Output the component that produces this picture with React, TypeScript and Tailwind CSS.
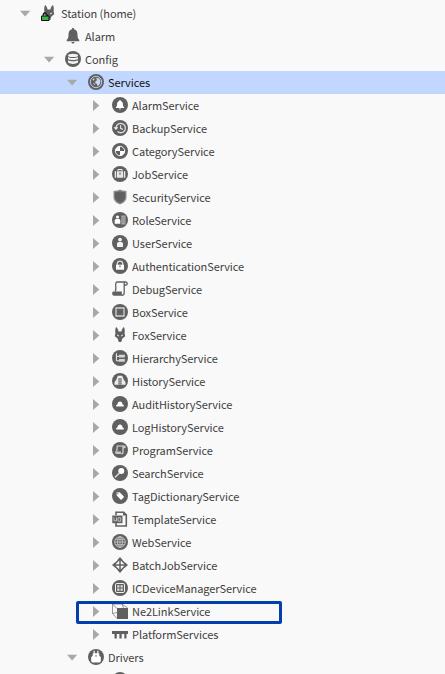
import type { ReactNode } from 'react'
import clsx from 'clsx'

const DARK = '#606060'
const LIGHT = '#f2f2f2'

// Round badge that most of the service icons sit on
function Disc({ children }: { children?: ReactNode }) {
  return (
    <>
      <circle cx="8" cy="8" r="8" fill={DARK} />
      {children}
    </>
  )
}

const bell = 'M8 3.1c.6 0 .8.4.8.8 1.5.4 2.1 1.6 2.1 3.2 0 1.7.5 2.5 1.3 3.3v.6H3.8v-.6c.8-.8 1.3-1.6 1.3-3.3 0-1.6.6-2.8 2.1-3.2 0-.4.2-.8.8-.8zM6.9 11.6h2.2c-.1.7-.5 1-1.1 1s-1-.3-1.1-1z'
const fox = 'M4 0C5.400 1 6.300 2.600 6.600 4.500h2.800C9.700 2.600 10.600 1 12 0c.8 2 .9 4.200.6 6.300L13.200 9.200l-2.800 2.300L9.200 15H6.800L5.600 11.500 2.800 9.200l.6-2.900C3.100 4.200 3.200 2 4 0z'
const foxEyes = 'M5 7.500l1.800.8v1.100L5.300 8.800zM11 7.500l-1.800.8v1.100l1.500-.6z'

const icons: Record<string, ReactNode> = {
  station: (
    <>
      <path d={fox} fill={DARK} />
      <path d={foxEyes} fill={LIGHT} />
      <path d="M2.200 11V9.800a2 2 0 0 1 4 0V11" fill="none" stroke="#111" strokeWidth="1.200" />
      <path d="M.5 11h7.500v4.500H.500z" fill="#38b449" stroke="#111" />
    </>
  ),
  alarm: (
    <path d="M8 0c.8 0 1.100.5 1.100 1.200 2.400.6 3.400 2.600 3.400 5.300 0 3 .5 4.300 1.800 5.500v1.200H1.700V12C3 10.800 3.500 9.500 3.500 6.500c0-2.700 1-4.700 3.400-5.300C6.900.5 7.200 0 8 0zM6.300 14h3.400c-.1.900-.8 1.500-1.700 1.500S6.400 14.900 6.300 14z" fill={DARK} />
  ),
  config: (
    <Disc>
      <ellipse cx="8" cy="4.400" rx="5" ry="1.700" fill={LIGHT} />
      <path d="M3 6c2 1.400 8 1.400 10 0v2c-2 1.400-8 1.400-10 0zM3 9.300c2 1.400 8 1.400 10 0v2.300c-2 1.900-8 1.900-10 0z" fill={LIGHT} />
    </Disc>
  ),
  services: (
    <Disc>
      <circle cx="8" cy="8" r="5.700" fill="none" stroke="#b9c8e6" strokeWidth="1" />
      <path d="M8.200 3.800l3 .6 1.300 2.600-.8 3.200-2.200 2-.5-2.200-1.800-.7.200-2 1.600-1.100zM4.600 5.200l1.800-1 .1 1.200-1.300 1.300zM5 9l1.800.8-.3 1.800z" fill="#cbd8f2" />
    </Disc>
  ),
  alarmService: <Disc><path d={bell} fill="#fff" /></Disc>,
  backup: (
    <Disc>
      <path d="M4 8a4.700 4.700 0 1 1 1.500 3.500" fill="none" stroke="#dedede" strokeWidth="1.300" />
      <path d="M1.500 7.200h4.800L4 10z" fill={LIGHT} />
      <path d="M8.600 5.200v3.200l2.300 1" fill="none" stroke="#dedede" strokeWidth="1.200" />
    </Disc>
  ),
  category: (
    <Disc>
      <circle cx="8" cy="8" r="4.700" fill={DARK} stroke={LIGHT} strokeWidth="1" />
      <path d="M8 8V3.300A4.700 4.700 0 0 0 3.300 8zM8 8v4.700A4.700 4.700 0 0 0 12.700 8z" fill="#fff" />
    </Disc>
  ),
  job: (
    <Disc>
      <path d="M6 5V3.500h4V5" fill="none" stroke={LIGHT} />
      <path d="M2.700 5.200h1.500v6.600H2.700zM5 5.200h6v6.600H5zM11.800 5.200h1.500v6.600h-1.500z" fill="#e8e8e8" />
      <path d="M7.300 6.800h1.400v1.600H7.300z" fill={DARK} />
    </Disc>
  ),
  security: (
    <>
      <path d="M8 .6c2.200 1 4.200 1.400 6.500 1.400v6c0 3.700-2.500 5.900-6.500 7.500C4 13.900 1.500 11.700 1.500 8V2C3.800 2 5.800 1.600 8 .6z" fill="#8c8c8c" />
      <path d="M8 2.200c1.700.7 3.400 1 5.200 1.100V8c0 3-2 4.600-5.200 6-3.200-1.400-5.200-3-5.200-6V3.300C4.600 3.200 6.300 2.900 8 2.200z" fill={DARK} />
    </>
  ),
  role: (
    <Disc>
      <circle cx="5.500" cy="5" r="1.600" fill="#fff" />
      <path d="M2.700 11.700V8.500c0-1 .7-1.600 1.600-1.600h2.400c.9 0 1.600.6 1.600 1.600v3.200z" fill="#fff" />
      <path d="M9.300 3.500h4.200v9H9.300z" fill="#a6a6a6" />
      <path d="M9.300 5.900h4.200M9.300 8h4.200M9.300 10.100h4.200" stroke="#8a8a8a" strokeWidth=".7" />
    </Disc>
  ),
  user: (
    <Disc>
      <circle cx="8" cy="4.600" r="1.900" fill={LIGHT} />
      <path d="M5 12V8.700c0-1.100.8-1.800 1.800-1.800h2.400c1 0 1.800.7 1.800 1.800V12z" fill={LIGHT} />
    </Disc>
  ),
  auth: (
    <Disc>
      <path d="M5.300 7V5.900a2.700 2.700 0 0 1 5.400 0V7" fill="none" stroke="#dcdcdc" strokeWidth="1.200" />
      <path d="M4 6.700h8v5H4z" fill="#fff" />
      <path d="M7.400 7.500h1.200v1.800H7.400z" fill={DARK} />
    </Disc>
  ),
  debug: (
    <>
      <path d="M3.300 10.500c1.200-2.500 0-6 .5-8.200.2-.9.700-1.300 1.500-1.300h8.500c1.900.2 1.800 3 .2 3h-1.800M12.200 1.500v10.300c0 1.700-.8 2.500-2.200 2.500" fill="none" stroke={DARK} strokeWidth="1.300" />
      <path d="M1.200 10.500h8.600v1.700c0 1 .4 1.900 1 2.600H2.200c-1.300 0-2-.8-2-2.200 0-1.300.3-2.100 1-2.100z" fill={DARK} />
    </>
  ),
  box: (
    <Disc>
      <path d="M4 4h8v8H4z" fill={DARK} stroke="#d0d0d0" strokeWidth="1.300" />
    </Disc>
  ),
  fox: (
    <>
      <path d={fox} fill={DARK} />
      <path d={foxEyes} fill={LIGHT} />
    </>
  ),
  hierarchy: (
    <Disc>
      <path d="M4.400 3.300v7.500H8M4.400 6.300H8" fill="none" stroke={LIGHT} />
      <path d="M7 4.800h5.800v2.800H7zM7 9h5.800v2.800H7z" fill="#d6d6d6" />
    </Disc>
  ),
  history: (
    <Disc>
      <path d="M5.800 2.700h4.400l1.300 3.500 2 3v2.500h-11V9.200l2-3z" fill="#ededed" />
      <path d="M6.300 5.200h3.400v6.500H6.300z" fill="#858585" />
      <path d="M6.300 7.300h3.400M6.300 9.500h3.400" stroke="#b5b5b5" strokeWidth=".7" />
    </Disc>
  ),
  cloud: (
    <Disc>
      <path d="M4.800 10.400c-.9 0-1-1-.4-1.500.3-.3.700-.4 1-.5.200-1.600 1.200-2.800 2.600-2.800s2.400 1.200 2.600 2.800c.3.100.7.200 1 .5.600.5.500 1.500-.4 1.500z" fill="#fff" />
    </Disc>
  ),
  program: (
    <Disc>
      <path d="M4.700 9.500L5.300 4h7.100c1 .3.800 1.800 0 1.800H11M11 4.200v6.200c0 1-.6 1.500-1.400 1.500" fill="none" stroke="#e0e0e0" strokeWidth="1.100" />
      <path d="M3 9.500h5.900c0 1.100.3 1.900.8 2.500H4.500C3.500 12 3 11 3 9.500z" fill="#c8c8c8" />
    </Disc>
  ),
  search: (
    <Disc>
      <circle cx="9.300" cy="6" r="3" fill="#fff" />
      <path d="M7.200 8.200l-3.800 3.900" stroke="#dedede" strokeWidth="1.400" strokeLinecap="round" />
    </Disc>
  ),
  tag: (
    <Disc>
      <path d="M4.600 4.600l3-.3 4 3.900c.4.400.4.800 0 1.200L9.700 11.400c-.4.400-.8.400-1.200 0L4.700 7.500z" fill="#fff" />
      <circle cx="5.900" cy="5.700" r=".6" fill={DARK} />
    </Disc>
  ),
  template: (
    <>
      <path d="M4 4V1.200h7.500l2.800 2.800V15H4v-3" fill="none" stroke={DARK} strokeWidth="1.600" />
      <path d="M.3 4.500h10.200v7.700H.3z" fill={DARK} />
      <path d="M2 6.500v3.300h2.500V6.500M6 6.800v3.400h2.700V6.800z" fill="none" stroke="#c5c5c5" strokeWidth=".9" />
      <path d="M11 .8h1l2.700 2.700v1H11z" fill={DARK} />
    </>
  ),
  web: (
    <Disc>
      <g fill="none" stroke="#c4c4c4" strokeWidth=".9">
        <circle cx="8" cy="8" r="5.300" />
        <ellipse cx="8" cy="8" rx="2.500" ry="5.300" />
        <path d="M8 2.700v10.600M2.700 8h10.600M3.500 5.300h9M3.500 10.700h9" />
      </g>
    </Disc>
  ),
  batch: (
    <>
      <path d="M8 1.800L14.200 8 8 14.200 1.800 8z" fill="none" stroke={DARK} strokeWidth="1.600" />
      <path d="M8 1v14M1 8h14" stroke={DARK} strokeWidth="1.500" />
      <path d="M8 0l2.800 3.300H5.200zM8 16l2.800-3.300H5.200zM0 8l3.300-2.800v5.600zM16 8l-3.300-2.800v5.600z" fill={DARK} />
    </>
  ),
  device: (
    <Disc>
      <rect x="3.500" y="3.500" width="9" height="9" rx="1.300" fill="none" stroke={LIGHT} strokeWidth="1" />
      <path d="M5.200 5.200h2.300v2.300H5.200zM8.500 5.200h2.300v2.300H8.500zM5.200 8.500h2.300v2.300H5.200zM8.500 8.500h2.300v2.300H8.500z" fill="#dcdcdc" />
    </Disc>
  ),
  link: (
    <>
      <path d="M.5 1h9.500l1.500 4M.5 1v9.500L5 15.500M.5 10.500l4.500-1M.5 1L5 5.500M10 1l5.500 4" fill="none" stroke="#7c7c7c" strokeWidth=".8" />
      <path d="M5 5h11v11H5z" fill={DARK} />
    </>
  ),
  platform: (
    <path d="M0 5h16v3h-1.500v4.500h-2.200V8H9.700v4.500H7.400V8H4.800v4.500H2.500V8H0z" fill={DARK} />
  ),
  drivers: (
    <Disc>
      <path d="M5.500 1.700h1.300v3H5.500zM9.200 1.700h1.300v3H9.200z" fill={LIGHT} />
      <path d="M4.800 4.300h6.400v2.300l1.600 1.700v4.200l-1.300.9h-7l-1.300-.9V8.300l1.600-1.700z" fill="#fff" />
      <path d="M7.300 6.200h1.400v1.300H7.300z" fill={DARK} />
    </Disc>
  ),
  network: <Disc />,
}

type Row = {
  label: string
  icon: string
  depth: 0 | 1 | 2 | 3
  arrow?: 'open' | 'closed'
  state?: 'selected' | 'marked'
}

const service = (label: string, icon: string): Row => ({
  label, icon, depth: 3, arrow: 'closed',
})

const rows: Row[] = [
  { label: 'Station (home)', icon: 'station', depth: 0, arrow: 'open' },
  { label: 'Alarm', icon: 'alarm', depth: 1 },
  { label: 'Config', icon: 'config', depth: 1, arrow: 'open' },
  { label: 'Services', icon: 'services', depth: 2, arrow: 'open', state: 'selected' },
  service('AlarmService', 'alarmService'),
  service('BackupService', 'backup'),
  service('CategoryService', 'category'),
  service('JobService', 'job'),
  service('SecurityService', 'security'),
  service('RoleService', 'role'),
  service('UserService', 'user'),
  service('AuthenticationService', 'auth'),
  service('DebugService', 'debug'),
  service('BoxService', 'box'),
  service('FoxService', 'fox'),
  service('HierarchyService', 'hierarchy'),
  service('HistoryService', 'history'),
  service('AuditHistoryService', 'cloud'),
  service('LogHistoryService', 'cloud'),
  service('ProgramService', 'program'),
  service('SearchService', 'search'),
  service('TagDictionaryService', 'tag'),
  service('TemplateService', 'template'),
  service('WebService', 'web'),
  service('BatchJobService', 'batch'),
  service('ICDeviceManagerService', 'device'),
  { ...service('Ne2LinkService', 'link'), state: 'marked' },
  service('PlatformServices', 'platform'),
  { label: 'Drivers', icon: 'drivers', depth: 2, arrow: 'open' },
  { label: '', icon: 'network', depth: 3 },
]

const indent = ['pl-[17px]', 'pl-[41px]', 'pl-16', 'pl-[88px]']

function Arrow({ kind }: { kind?: 'open' | 'closed' }) {
  return (
    <svg className="mr-2 h-4 w-4 shrink-0" viewBox="0 0 16 16" fill="#a8a8a8">
      {kind === 'open' && <path d="M3 5.700h10.200L8.100 11.500z" />}
      {kind === 'closed' && <path d="M5 3l6.300 5.500L5 14z" />}
    </svg>
  )
}

function TreeRow({ row }: { row: Row }) {
  return (
    <div
      className={clsx(
        'relative flex h-[23px] shrink-0 items-start pt-[3px]',
        indent[row.depth],
        row.state === 'selected' ? 'bg-[#c2d7ff] text-[#111]' : 'text-[#404040]',
      )}
    >
      <Arrow kind={row.arrow} />
      <svg className="h-4 w-4 shrink-0" viewBox="0 0 16 16">{icons[row.icon]}</svg>
      <span className="ml-1 text-[11px] leading-[17px] tracking-[-0.07px] whitespace-nowrap">{row.label}</span>
      {row.state === 'marked' && (
        <div className="absolute top-px left-[76px] h-[23px] w-[206px] rounded-[2px] border-3 border-[#0340ae]" />
      )}
    </div>
  )
}

export default function App() {
  return (
    <div className="flex h-[674px] w-[445px] flex-col overflow-hidden bg-[#f9f9f9] pt-0.5 font-['Noto_Sans_CJK_SC',sans-serif]">
      {rows.map((row, i) => (
        <TreeRow key={i} row={row} />
      ))}
    </div>
  )
}
